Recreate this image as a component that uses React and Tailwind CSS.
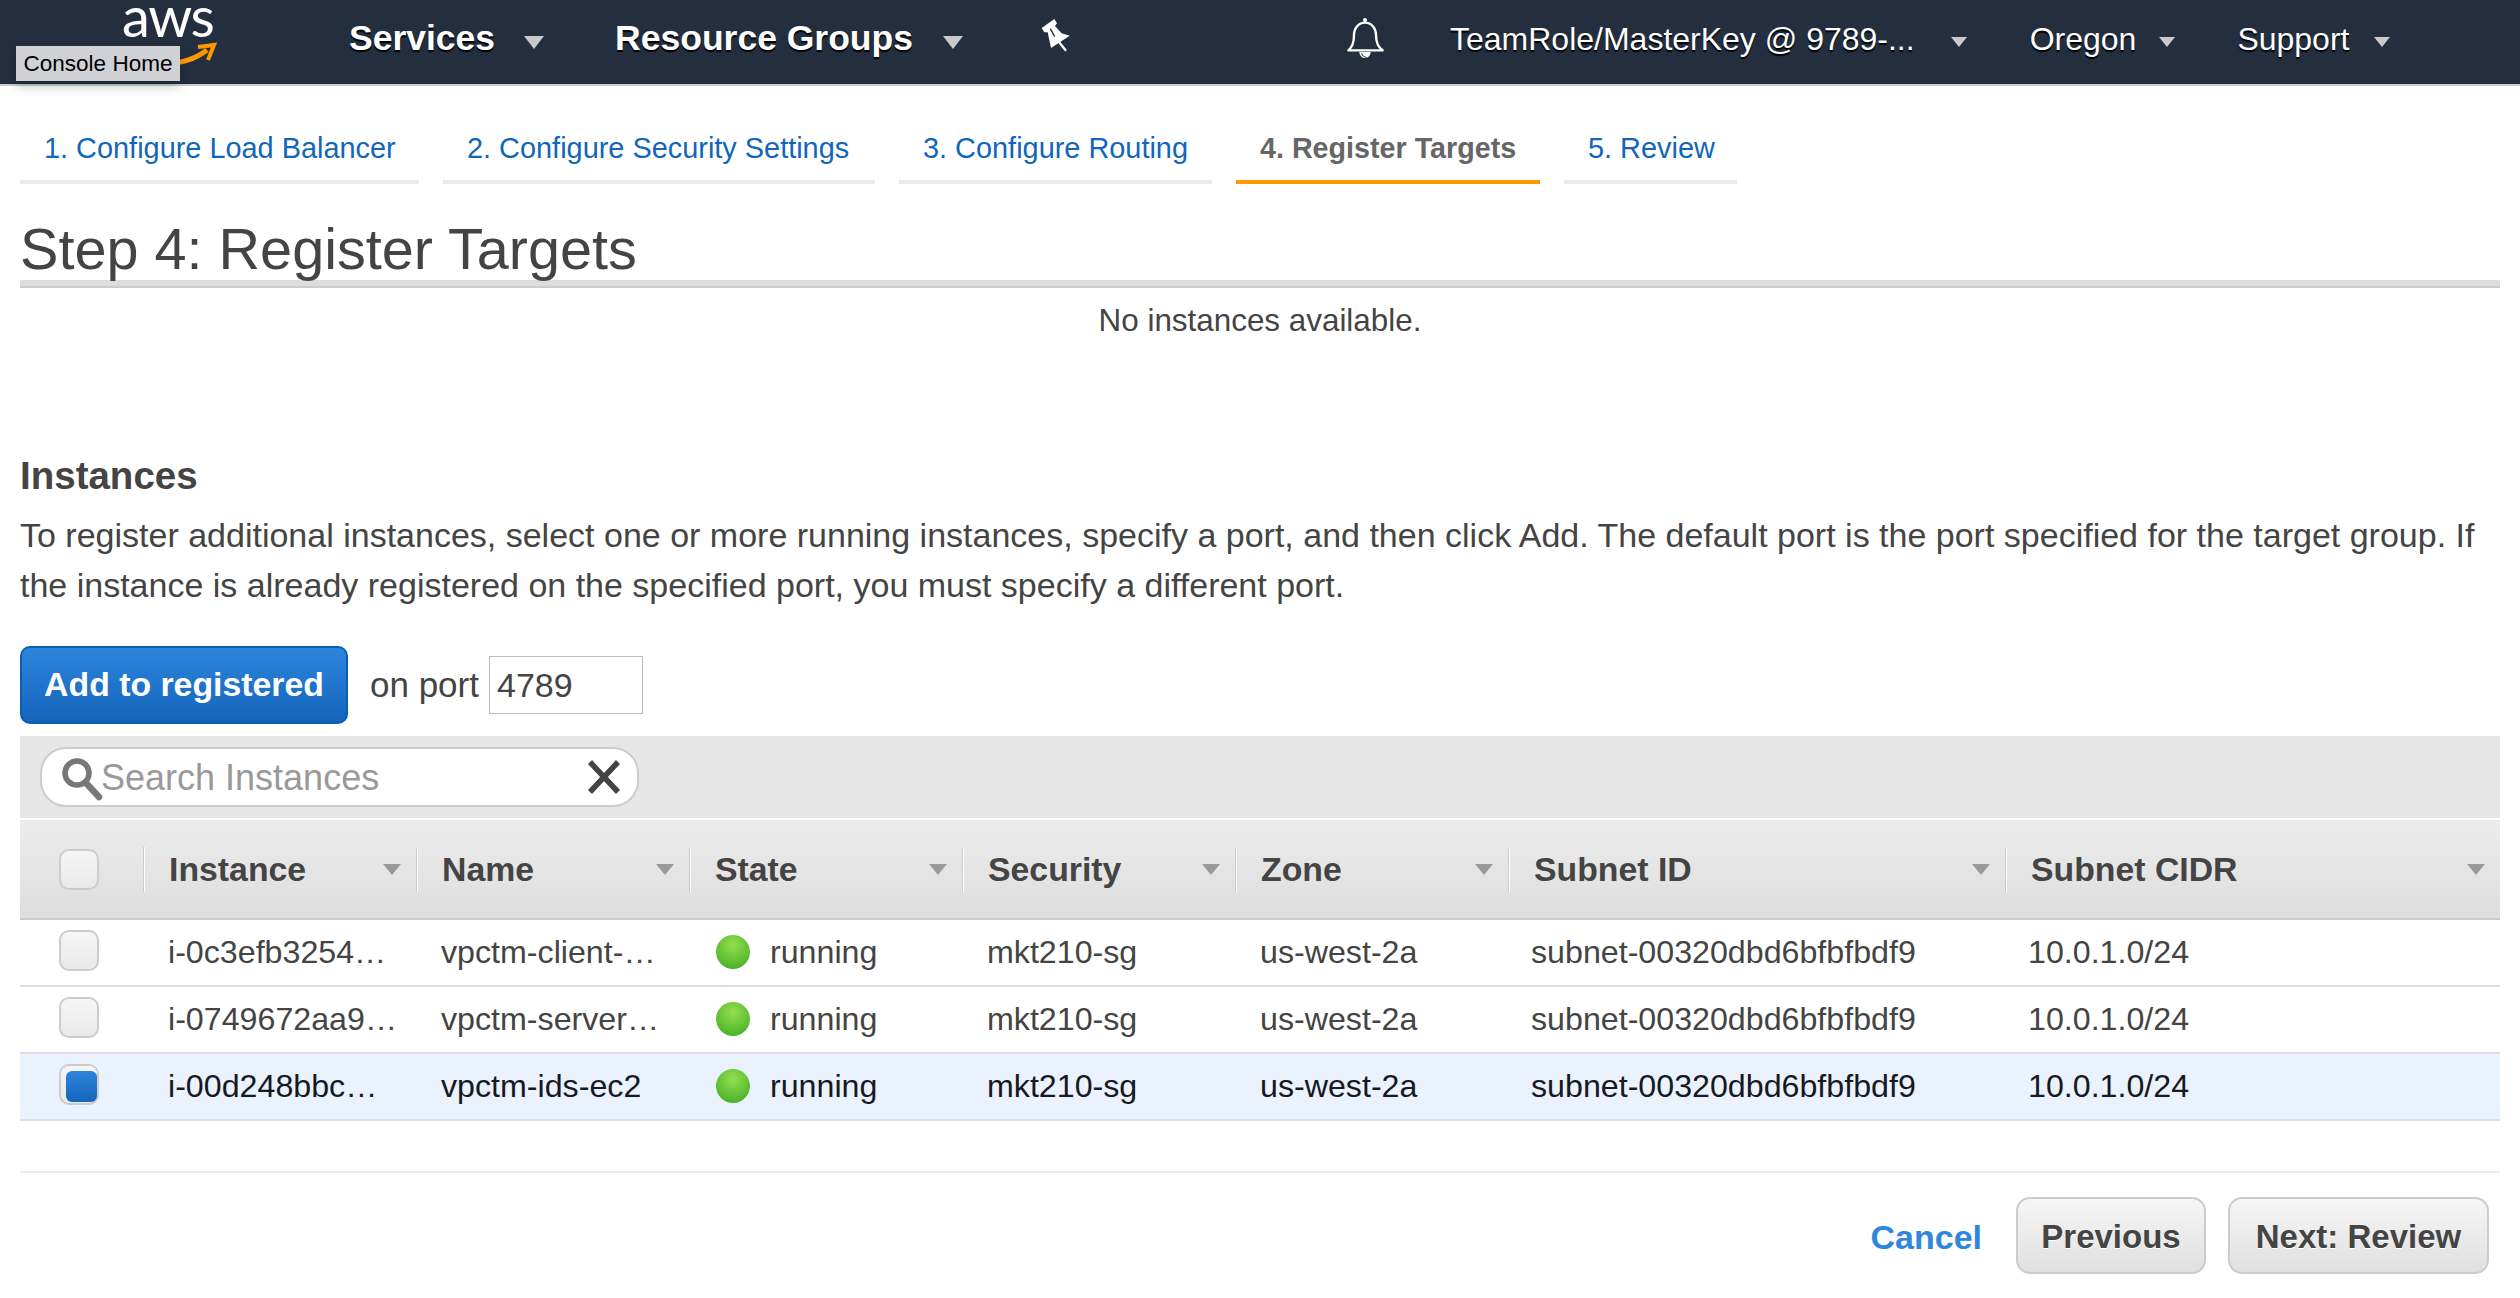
const tabs = [
  { label: "1. Configure Load Balancer", width: "w-[399px]" },
  { label: "2. Configure Security Settings", width: "w-[432px]" },
  { label: "3. Configure Routing", width: "w-[313px]" },
  { label: "4. Register Targets", width: "w-[304px]", active: true },
  { label: "5. Review", width: "w-[173px]" },
];

const columns = ["Instance", "Name", "State", "Security", "Zone", "Subnet ID", "Subnet CIDR"];

const rows = [
  { id: "i-0c3efb3254…", name: "vpctm-client-…" },
  { id: "i-0749672aa9…", name: "vpctm-server…" },
  { id: "i-00d248bbc…", name: "vpctm-ids-ec2", selected: true },
];

const gridCols = "grid grid-cols-[123px_273px_273px_273px_273px_273px_497px_495px]";
const navText = "-mt-[6px] text-[32px] text-white [text-shadow:0_2px_1px_#000]";
const navBold = "-mt-[6px] text-[35.5px] font-bold text-white [text-shadow:0_2px_1px_#000]";

function Caret({ big }) {
  return big ? (
    <span className="w-0 h-0 border-x-[10px] border-t-[13px] border-x-transparent border-t-[#c9c9c9]" />
  ) : (
    <span className="w-0 h-0 border-x-[8px] border-t-[10px] border-x-transparent border-t-[#c9c9c9]" />
  );
}

function Checkbox({ checked }) {
  return (
    <span className="flex w-[40px] h-[41px] rounded-[10px] border-2 border-[#ccc] bg-gradient-to-b from-[#f6f6f6] to-[#e9e9e9]">
      {checked && (
        <span className="ml-[5px] mt-[5px] w-[32px] h-[31px] rounded-[6px] bg-gradient-to-b from-[#2e84dc] to-[#1465bb]" />
      )}
    </span>
  );
}

function Navbar() {
  return (
    <nav className="flex items-center h-[86px] bg-[#232f3e] border-b-2 border-[#ccc]">
      {/* Logo */}
      <div className="relative w-[349px] h-full shrink-0">
        <span className="absolute left-[122px] top-[1px] font-['Lato',sans-serif] text-[56px] leading-[30px] tracking-[-1.5px] text-white">
          aws
        </span>
        <svg className="absolute left-[116px] top-[40px]" width="104" height="28" viewBox="0 0 104 28" fill="none">
          <path d="M2 10C30 28 68 28 91 10" stroke="#f90" strokeWidth="5" />
          <path d="M82 7L98 5L92 20" stroke="#f90" strokeWidth="4" />
        </svg>
        <span className="absolute left-[16px] top-[46px] flex items-center justify-center w-[164px] h-[35px] pt-[1px] bg-[#d0d1d4] text-[22.5px] text-black shadow-[0_6px_10px_rgba(0,0,0,0.2)]">
          Console Home
        </span>
      </div>

      <span className={navBold}>Services</span>
      <span className="ml-[29px] flex"><Caret big /></span>
      <span className={`ml-[71px] ${navBold}`}>Resource Groups</span>
      <span className="ml-[30px] flex"><Caret big /></span>

      <svg className="ml-[58px] -mt-[6px]" width="80" height="70" viewBox="0 0 240 210">
        <path
          d="M62 72L100 45L108 58L102 66L122 88L146 95L90 132L85 108L80 85L70 85Z"
          fill="#fff"
        />
        <path d="M112 112L135 140" stroke="#fff" strokeWidth="7" />
        <path d="M88 74L101 98" stroke="#232f3e" strokeWidth="4" />
      </svg>

      <svg className="ml-[229px] -mt-[2px]" width="80" height="70" viewBox="0 0 240 210" fill="none">
        <path
          d="M55 133C72 120 72 100 72 88C72 66 86 50 105 50C124 50 138 66 138 88C138 100 138 120 158 133Z"
          stroke="#fff"
          strokeWidth="7"
          strokeLinejoin="round"
        />
        <circle cx="105" cy="42" r="6" fill="#fff" />
        <path d="M88 138C90 162 120 162 122 138Z" fill="#fff" />
        <path d="M95 142C97 150 103 154 110 154" stroke="#232f3e" strokeWidth="3" />
      </svg>

      <span className={`ml-[40px] ${navText}`}>TeamRole/MasterKey @ 9789-...</span>
      <span className="ml-[36px] flex"><Caret /></span>
      <span className={`ml-[63px] ${navText}`}>Oregon</span>
      <span className="ml-[23px] flex"><Caret /></span>
      <span className={`ml-[62px] ${navText}`}>Support</span>
      <span className="ml-[25px] flex"><Caret /></span>
    </nav>
  );
}

function StepTabs() {
  return (
    <div className="flex gap-[24px] mt-[40px]">
      {tabs.map((tab) =>
        tab.active ? (
          <div
            key={tab.label}
            className={`${tab.width} pl-[24px] pb-[10px] border-b-4 border-[#f90] text-[28.7px] leading-[44px] font-bold text-[#666]`}
          >
            {tab.label}
          </div>
        ) : (
          <div
            key={tab.label}
            className={`${tab.width} pl-[24px] pb-[10px] border-b-4 border-[#eaeaea] text-[28.9px] leading-[44px] text-[#1166bb]`}
          >
            {tab.label}
          </div>
        )
      )}
    </div>
  );
}

function SearchBar() {
  return (
    <div className="flex items-center h-[82px] pl-[20px] bg-[#e6e6e6]">
      <div className="flex items-center w-[599px] h-[60px] rounded-[26px] border-2 border-[#ccc] bg-white">
        <svg className="ml-[19px] mt-[3px] shrink-0 blur-[0.6px]" width="44" height="46" viewBox="0 0 44 46" fill="none">
          <circle cx="16" cy="17" r="12" stroke="#777" strokeWidth="5.5" />
          <path d="M25 27L38 41" stroke="#777" strokeWidth="6.5" strokeLinecap="round" />
        </svg>
        <input
          readOnly
          placeholder="Search Instances"
          className="ml-[-4px] mt-[2px] w-[481px] bg-transparent outline-none text-[36px] placeholder:text-[#999]"
        />
        <svg className="shrink-0 ml-[4px]" width="36" height="34" viewBox="0 0 36 34" fill="none">
          <path d="M4 2L32 32M32 2L4 32" stroke="#444" strokeWidth="5.5" />
        </svg>
      </div>
    </div>
  );
}

function InstanceTable() {
  return (
    <div>
      <SearchBar />
      <div
        className={`${gridCols} items-center h-[100px] mt-[2px] border-b-2 border-[#ccc] bg-gradient-to-b from-[#ececec] to-[#dedede]`}
      >
        <div className="pl-[39px]">
          <Checkbox />
        </div>
        {columns.map((col) => (
          <div
            key={col}
            className="flex items-center justify-between h-[45px] pl-[25px] pr-[15px] border-l border-[#ccc] shadow-[inset_1px_0_0_#fff]"
          >
            <span className="text-[33.8px] font-bold text-[#444]">{col}</span>
            <span className="w-0 h-0 border-x-[9px] border-t-[11px] border-x-transparent border-t-[#999]" />
          </div>
        ))}
      </div>
      {rows.map((row) => (
        <div
          key={row.id}
          className={`${gridCols} items-center h-[67px] border-b-2 border-[#ddd] text-[32.2px] ${
            row.selected ? "bg-[#eaf2fd] text-[#16191f]" : "text-[#444]"
          }`}
        >
          <div className="pl-[39px] self-start mt-[10px]">
            <Checkbox checked={row.selected} />
          </div>
          <div className="pl-[25px]">{row.id}</div>
          <div className="pl-[25px]">{row.name}</div>
          <div className="flex items-center pl-[27px]">
            <span className="w-[34px] h-[34px] rounded-full bg-[radial-gradient(circle_at_50%_30%,#93e050,#3aa81c)]" />
            <span className="ml-[20px]">running</span>
          </div>
          <div className="pl-[25px]">mkt210-sg</div>
          <div className="pl-[25px]">us-west-2a</div>
          <div className="pl-[23px]">subnet-00320dbd6bfbfbdf9</div>
          <div className="pl-[23px]">10.0.1.0/24</div>
        </div>
      ))}
    </div>
  );
}

export default function App() {
  return (
    <div className="min-h-[1298px] bg-white text-[#444] font-['Liberation_Sans',Arial,sans-serif] overflow-hidden">
      <Navbar />
      <main className="px-[20px]">
        <StepTabs />

        <h1 className="mt-[33px] pt-[1px] text-[57.6px] leading-[62px] text-[#444]">Step 4: Register Targets</h1>
        <div className="h-[8px] bg-[#ddd] border-b-2 border-[#ccc]" />

        <p className="mt-[13px] text-center text-[31.4px] leading-[40px]">No instances available.</p>

        <h2 className="mt-[112px] text-[38.5px] leading-[46px] font-bold">Instances</h2>
        <p className="mt-[11px] text-[34px] leading-[50px]">
          To register additional instances, select one or more running instances, specify a port, and then click Add.
          The default port is the port specified for the target group. If the instance is already registered on the
          specified port, you must specify a different port.
        </p>

        <div className="flex items-center mt-[36px]">
          <button className="w-[328px] h-[78px] pb-[2px] rounded-[10px] border-2 border-[#0b5fb3] bg-gradient-to-b from-[#2e84dc] to-[#1465bb] text-[33.8px] font-bold text-white">
            Add to registered
          </button>
          <span className="ml-[22px] text-[35px]">on port</span>
          <input
            readOnly
            value="4789"
            className="ml-[10px] w-[154px] h-[58px] pl-[7px] border border-[#bbb] bg-white text-[34px] outline-none"
          />
        </div>

        <div className="mt-[12px]">
          <InstanceTable />
        </div>

        <div className="h-[2px] mt-[50px] bg-[#eaeaea]" />

        <div className="flex items-center justify-end mt-[24px] mr-[11px]">
          <a className="mt-[3px] text-[34px] font-bold text-[#2f86dd]">Cancel</a>
          <button className="ml-[34px] w-[190px] h-[77px] pt-[2px] rounded-[14px] border-2 border-[#ccc] bg-gradient-to-b from-[#f6f6f6] to-[#e0e0e0] text-[33px] font-bold text-[#444] [text-shadow:0_1px_0_#fff]">
            Previous
          </button>
          <button className="ml-[22px] w-[261px] h-[77px] pt-[2px] rounded-[14px] border-2 border-[#ccc] bg-gradient-to-b from-[#f6f6f6] to-[#e0e0e0] text-[33px] font-bold text-[#444] [text-shadow:0_1px_0_#fff]">
            Next: Review
          </button>
        </div>
      </main>
    </div>
  );
}
